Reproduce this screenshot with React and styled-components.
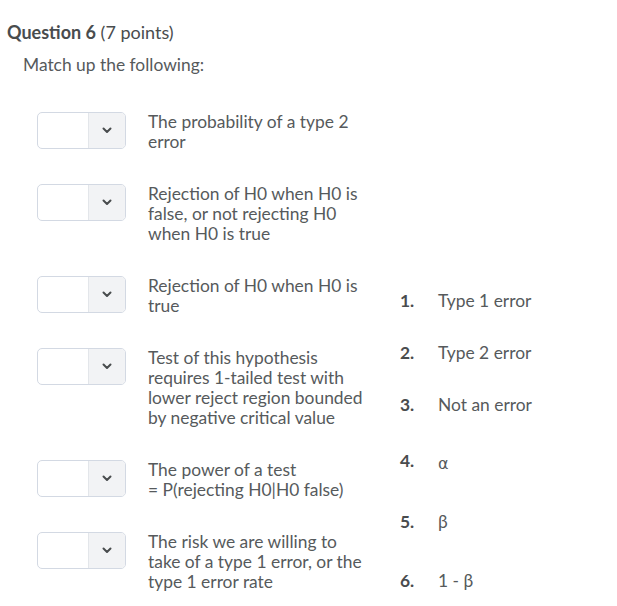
import React from 'react';
import styled, { createGlobalStyle } from 'styled-components';

const GlobalStyle = createGlobalStyle`
  body {
    margin: 0;
    background: #ffffff;
    font-family: Lato, "Open Sans", sans-serif;
    color: #565a5c;
  }
`;

const Page = styled.div`
  padding: 21px 0 0 7px;
`;

const Heading = styled.h2`
  margin: 0;
  font-size: 18px;
  font-weight: 400;
  line-height: 22px;
  color: #494c4e;
  b {
    font-weight: 700;
  }
`;

const Prompt = styled.p`
  margin: 11px 0 0 16px;
  font-size: 17.4px;
  line-height: 22px;
`;

const Board = styled.div`
  display: flex;
  margin: 36px 0 0 30px;
`;

const Pairs = styled.div`
  display: flex;
  flex-direction: column;
  gap: 32px;
`;

const Pair = styled.div`
  display: flex;
  align-items: flex-start;
  gap: 22px;
`;

const Select = styled.div`
  display: flex;
  width: 89px;
  height: 37px;
  box-sizing: border-box;
  border: 1px solid #d3d9e3;
  border-radius: 5px;
  overflow: hidden;
  background: #ffffff;
`;

const SelectValue = styled.div`
  flex: 1;
`;

const SelectArrow = styled.div`
  width: 36px;
  display: flex;
  align-items: center;
  justify-content: center;
  background: #f2f3f5;
  border-left: 1px solid #e3e6ea;
`;

const Statement = styled.div`
  width: 220px;
  font-size: 17.4px;
  line-height: 20px;
`;

const Choices = styled.ol`
  list-style: none;
  margin: 0 0 0 32px;
  padding: 179px 0 0 0;
`;

const Choice = styled.li`
  display: flex;
  font-size: 17.4px;
  line-height: 20px;
  margin-top: ${(p) => p.$gap}px;
`;

const Num = styled.span`
  width: 38px;
  font-weight: 700;
  color: #494c4e;
`;

const Label = styled.span`
  font-family: ${(p) => (p.$symbol ? '"DejaVu Sans", sans-serif' : 'inherit')};
  font-size: ${(p) => (p.$symbol ? '16px' : 'inherit')};
  padding-top: ${(p) => (p.$symbol ? '3px' : '0')};
`;

const Chevron = () => (
  <svg width="10" height="7" viewBox="0 0 10 7">
    <path d="M1.5 1.5 L5 5 L8.5 1.5" fill="none" stroke="#494c4e" strokeWidth="2" strokeLinecap="round" strokeLinejoin="round" />
  </svg>
);

const statements = [
  'The probability of a type 2 error',
  'Rejection of H0 when H0 is false, or not rejecting H0 when H0 is true',
  'Rejection of H0 when H0 is true',
  'Test of this hypothesis requires 1-tailed test with lower reject region bounded by negative critical value',
  ['The power of a test', '= P(rejecting H0|H0 false)'],
  'The risk we are willing to take of a type 1 error, or the type 1 error rate',
];

const choices = [
  ['Type 1 error', 0],
  ['Type 2 error', 32],
  ['Not an error', 32],
  ['\u03b1', 36, true],
  ['\u03b2', 38],
  ['1 - \u03b2', 39],
];

export default function App() {
  return (
    <Page>
      <GlobalStyle />
      <Heading>
        <b>Question 6</b> (7 points)
      </Heading>
      <Prompt>Match up the following:</Prompt>
      <Board>
        <Pairs>
          {statements.map((s, i) => (
            <Pair key={i}>
              <Select>
                <SelectValue />
                <SelectArrow>
                  <Chevron />
                </SelectArrow>
              </Select>
              <Statement>
                {Array.isArray(s) ? (
                  <>
                    {s[0]}
                    <br />
                    {s[1]}
                  </>
                ) : (
                  s
                )}
              </Statement>
            </Pair>
          ))}
        </Pairs>
        <Choices>
          {choices.map(([label, gap, symbol], i) => (
            <Choice key={i} $gap={gap}>
              <Num>{i + 1}.</Num>
              <Label $symbol={symbol}>{label}</Label>
            </Choice>
          ))}
        </Choices>
      </Board>
    </Page>
  );
}
